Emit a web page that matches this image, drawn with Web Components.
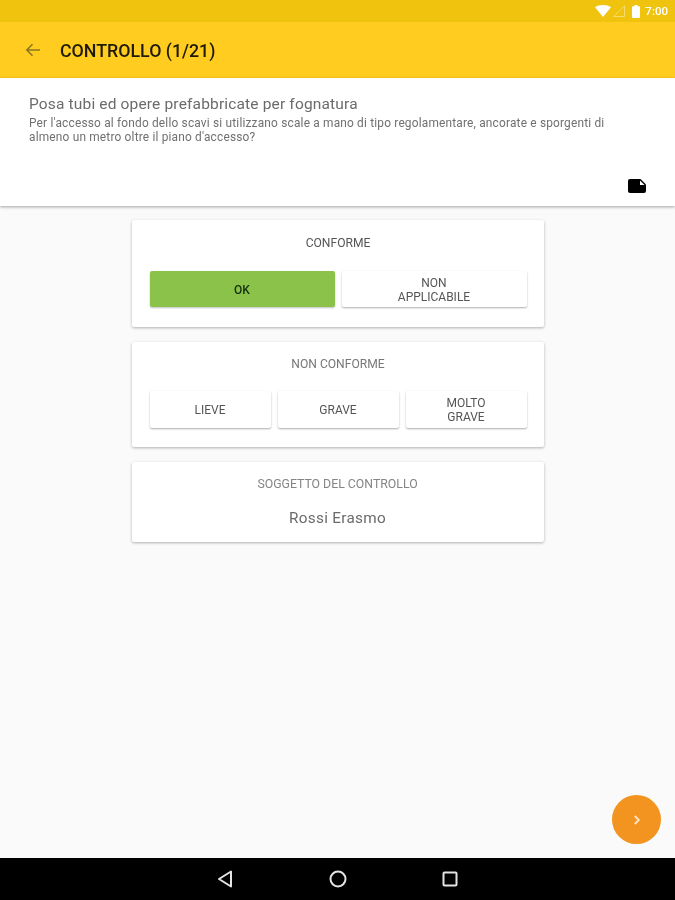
<!DOCTYPE html>
<html lang="it"><head><meta charset="utf-8"><title>Controllo</title>
<style>
html,body{margin:0;padding:0;height:900px;width:675px;overflow:hidden}
body{font-family:Roboto,"Liberation Sans",sans-serif;background:#fafafa}
</style></head><body>
<app-shell>
  <status-bar slot="status"></status-bar>
  <app-toolbar slot="toolbar" title="CONTROLLO (1/21)"></app-toolbar>
  <question-panel slot="question" heading="Posa tubi ed opere prefabbricate per fognatura">Per l'accesso al fondo dello scavi si utilizzano scale a mano di tipo regolamentare, ancorate e sporgenti di almeno un metro oltre il piano d'accesso?</question-panel>
  <answer-card heading="CONFORME" tone="dark" pad="16" pad-bottom="20" gap="21" btn="36" columns="2">
    <answer-button selected>OK</answer-button>
    <answer-button>NON<br>APPLICABILE</answer-button>
  </answer-card>
  <answer-card heading="NON CONFORME" pad="15" pad-bottom="19" gap="20" btn="37" columns="3">
    <answer-button>LIEVE</answer-button>
    <answer-button>GRAVE</answer-button>
    <answer-button>MOLTO<br>GRAVE</answer-button>
  </answer-card>
  <subject-card heading="SOGGETTO DEL CONTROLLO">Rossi Erasmo</subject-card>
  <next-fab slot="fab"></next-fab>
  <nav-bar slot="nav"></nav-bar>
</app-shell>
<script>
function def(name, html){
  customElements.define(name, class extends HTMLElement{
    connectedCallback(){
      if(this.shadowRoot) return;
      const r=this.attachShadow({mode:'open'});
      r.innerHTML=typeof html==='function'?html(this):html;
    }
  });
}
def('app-shell',`<style>
:host{display:flex;flex-direction:column;position:relative;width:675px;height:900px;background:#fafafa;overflow:hidden;filter:blur(.35px)}
main{flex:1;display:flex;flex-direction:column;align-items:center;gap:15px;padding-top:14px;min-height:0}
</style><slot name="status"></slot><slot name="toolbar"></slot><slot name="question"></slot><main><slot></slot></main><slot name="fab"></slot><slot name="nav"></slot>`);

def('status-bar',`<style>
:host{display:flex;align-items:center;justify-content:flex-end;height:22px;background:#f0c30e;color:#fff;padding-right:7px;box-sizing:border-box;font:500 11.5px Roboto,sans-serif}
svg{display:block}
.w{margin-right:2px}.s{margin-right:7px}.b{margin-right:5px}
</style>
<svg class="w" width="16" height="12" viewBox="0 0 16 12"><path d="M0 2.2C2 .8 5 0 8 0s6 .8 8 2.2L8 12z" fill="#fff"/></svg>
<svg class="s" width="12" height="12" viewBox="0 0 12 12"><path d="M11.5 .8V11.5H.8z" fill="none" stroke="#f6dc6a" stroke-width="1"/></svg>
<svg class="b" width="8" height="13" viewBox="0 0 8 13"><path d="M2.5 0h3v1.2H7a1 1 0 0 1 1 1V12a1 1 0 0 1-1 1H1a1 1 0 0 1-1-1V2.200a1 1 0 0 1 1-1h1.500z" fill="#fff"/></svg>
<span>7:00</span>`);

def('app-toolbar',el=>`<style>
:host{display:flex;align-items:center;height:56px;background:#ffcc1f;box-sizing:border-box;padding-left:25px;font:500 17.800px Roboto,sans-serif;color:#1c1a08}
svg{display:block;margin-right:20px}
</style>
<svg width="15" height="14" viewBox="0 0 15 14"><path d="M15 7H2M7.500 1.200 1.800 7l5.700 5.800" fill="none" stroke="#8b7720" stroke-width="1.600"/></svg>
<span>${el.getAttribute('title')}</span>`);

def('question-panel',el=>`<style>
:host{display:block;height:128px;background:#fff;box-sizing:border-box;padding:17px 60px 0 29px;position:relative;box-shadow:0 1px 3px rgba(0,0,0,.35);z-index:1;color:#6f6f6f}
h1{margin:0 0 3px;font:400 15.500px/18px Roboto,sans-serif;color:#6b6b6b;letter-spacing:.16px;white-space:nowrap}
p{margin:0;font:400 11.900px/14px Roboto,sans-serif;color:#707070;letter-spacing:.18px}
svg{position:absolute;left:628px;top:101px}
</style><h1>${el.getAttribute('heading')}</h1><p><slot></slot></p>
<svg width="18" height="14" viewBox="0 0 18 14"><path d="M2 0h10.500L18 5.500V12a2 2 0 0 1-2 2H2a2 2 0 0 1-2-2V2a2 2 0 0 1 2-2z" fill="#000"/><path d="M12 1.500V6h4.500z" fill="#fff"/></svg>`);

def('answer-card',el=>{
  const n=el.getAttribute('columns');
  const dark=el.getAttribute('tone')==='dark';
  return `<style>
:host{display:block;width:412px;box-sizing:border-box;background:#fff;border-radius:2px;box-shadow:0 1px 3px rgba(0,0,0,.3);padding:${el.getAttribute('pad')}px 17px ${el.getAttribute('pad-bottom')}px 18px;--btn-h:${el.getAttribute('btn')}px}
h2{margin:0 0 ${el.getAttribute('gap')}px;text-align:center;font:400 12.100px/14px Roboto,sans-serif;color:${dark?'#555':'#777'}}
div{display:grid;grid-template-columns:repeat(${n},1fr);gap:7px}
</style><h2>${el.getAttribute('heading')}</h2><div><slot></slot></div>`;
});

customElements.define('answer-button',class extends HTMLElement{
  connectedCallback(){
    if(this.shadowRoot) return;
    this.attachShadow({mode:'open'}).innerHTML=`<style>
:host{display:flex;align-items:center;justify-content:center;height:var(--btn-h,37px);box-sizing:border-box;padding-top:1px;background:#fff;border-radius:2px;box-shadow:0 1px 2px rgba(0,0,0,.32);text-align:center;font:400 12px/14px Roboto,sans-serif;color:#555}
:host([selected]){background:#8bc34a;color:#14300a;font-weight:500;box-shadow:0 1px 2px rgba(0,0,0,.25)}
</style><span><slot></slot></span>`;
  }
});

def('subject-card',el=>`<style>
:host{display:block;width:412px;height:80px;box-sizing:border-box;background:#fff;border-radius:2px;box-shadow:0 1px 3px rgba(0,0,0,.3);padding-top:15px;text-align:center}
h2{margin:0 0 17px;font:400 12.300px/14px Roboto,sans-serif;color:#858585}
p{margin:0;font:400 15.300px/20px Roboto,sans-serif;color:#6a6a6a;letter-spacing:.3px}
</style><h2>${el.getAttribute('heading')}</h2><p><slot></slot></p>`);

def('next-fab',`<style>
:host{position:absolute;left:612px;top:795px;width:49px;height:49px;border-radius:50%;background:#f39320;display:flex;align-items:center;justify-content:center}
svg{display:block}
</style><svg width="8" height="10" viewBox="0 0 8 10"><path d="M1.800 1 5.800 5l-4 4" fill="none" stroke="#fde7c8" stroke-width="1.800"/></svg>`);

def('nav-bar',`<style>
:host{display:flex;align-items:center;height:42px;background:#000;box-sizing:border-box;padding-left:217px;flex:none}
svg{display:block}
</style>
<svg width="16" height="18" viewBox="0 0 16 18" style="margin-right:96px"><path d="M14 1.500V16.500L2 9z" fill="none" stroke="#e4e4e4" stroke-width="2" stroke-linejoin="round"/></svg>
<svg width="18" height="18" viewBox="0 0 18 18" style="margin-right:95px"><circle cx="9" cy="9" r="7.500" fill="none" stroke="#e4e4e4" stroke-width="2"/></svg>
<svg width="16" height="16" viewBox="0 0 16 16"><rect x="1.500" y="1.500" width="13" height="13" rx="1" fill="none" stroke="#e4e4e4" stroke-width="2"/></svg>`);
</script>
</body></html>
